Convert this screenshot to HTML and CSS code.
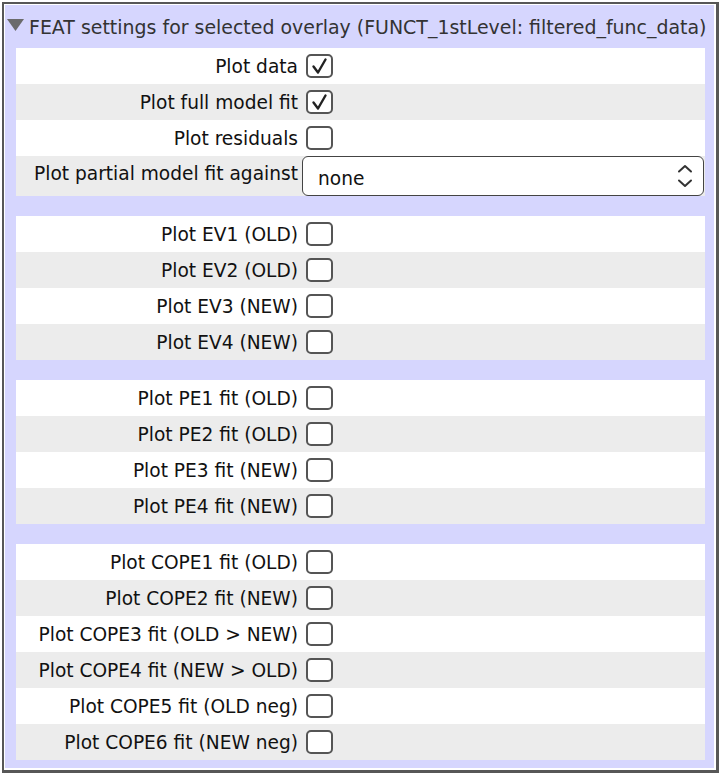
FILE: index.html
```html
<!DOCTYPE html>
<html>
<head>
<meta charset="utf-8">
<link rel="stylesheet" href="styles.css">
</head>
<body>
<div class="frame">
  <div class="inner">
    <div class="header">
      <svg class="tri" width="17" height="12" viewBox="0 0 17 12"><polygon points="0,0 17,0 8.5,12" fill="#6b6b6b"/></svg>
      <span class="title">FEAT settings for selected overlay (FUNCT_1stLevel: filtered_func_data)</span>
    </div>
    <div class="panel">
      <div class="group">
        <div class="row"><span class="label">Plot data</span><span class="cb"><svg viewBox="0 0 27 24" width="27" height="24"><polyline points="7.5,12.5 12,18.5 19.5,5.5" fill="none" stroke="#222" stroke-width="2.4" stroke-linecap="round" stroke-linejoin="round"/></svg></span></div>
        <div class="row"><span class="label">Plot full model fit</span><span class="cb"><svg viewBox="0 0 27 24" width="27" height="24"><polyline points="7.5,12.5 12,18.5 19.5,5.5" fill="none" stroke="#222" stroke-width="2.4" stroke-linecap="round" stroke-linejoin="round"/></svg></span></div>
        <div class="row"><span class="label">Plot residuals</span><span class="cb"></span></div>
        <div class="row tall"><span class="label">Plot partial model fit against</span>
          <div class="select"><span class="val">none</span>
            <svg class="chev" width="16" height="24" viewBox="0 0 16 24"><polyline points="2,7.5 8,2 14,7.5" fill="none" stroke="#333" stroke-width="2" stroke-linecap="round" stroke-linejoin="round"/><polyline points="2,16.5 8,22 14,16.5" fill="none" stroke="#333" stroke-width="2" stroke-linecap="round" stroke-linejoin="round"/></svg>
          </div>
        </div>
      </div>
      <div class="group">
        <div class="row"><span class="label">Plot EV1 (OLD)</span><span class="cb"></span></div>
        <div class="row"><span class="label">Plot EV2 (OLD)</span><span class="cb"></span></div>
        <div class="row"><span class="label">Plot EV3 (NEW)</span><span class="cb"></span></div>
        <div class="row"><span class="label">Plot EV4 (NEW)</span><span class="cb"></span></div>
      </div>
      <div class="group">
        <div class="row"><span class="label">Plot PE1 fit (OLD)</span><span class="cb"></span></div>
        <div class="row"><span class="label">Plot PE2 fit (OLD)</span><span class="cb"></span></div>
        <div class="row"><span class="label">Plot PE3 fit (NEW)</span><span class="cb"></span></div>
        <div class="row"><span class="label">Plot PE4 fit (NEW)</span><span class="cb"></span></div>
      </div>
      <div class="group">
        <div class="row"><span class="label">Plot COPE1 fit (OLD)</span><span class="cb"></span></div>
        <div class="row"><span class="label">Plot COPE2 fit (NEW)</span><span class="cb"></span></div>
        <div class="row"><span class="label">Plot COPE3 fit (OLD &gt; NEW)</span><span class="cb"></span></div>
        <div class="row"><span class="label">Plot COPE4 fit (NEW &gt; OLD)</span><span class="cb"></span></div>
        <div class="row"><span class="label">Plot COPE5 fit (OLD neg)</span><span class="cb"></span></div>
        <div class="row"><span class="label">Plot COPE6 fit (NEW neg)</span><span class="cb"></span></div>
      </div>
    </div>
  </div>
</div>
</body>
</html>
```
FILE: styles.css
```css
html, body {
  margin: 0;
  padding: 0;
  background: #fff;
}
body {
  font-family: "DejaVu Sans", sans-serif;
  color: #111;
}
.frame {
  margin: 2px 0 0 2px;
  width: 712px;
  border: 2px solid #575757;
  border-right-width: 3px;
  border-bottom-width: 3px;
}
.inner {
  border-left: 1px solid #fff;
  border-top: 1px solid #fff;
  border-right: 2px solid #fff;
  border-bottom: 2px solid #fff;
  background: #d6d6fe;
  padding: 0 9px 8px 11px;
}
.header {
  height: 43px;
  display: flex;
  align-items: center;
  margin-left: -9px;
}
.tri {
  margin: -4px 5px 0 0;
  flex: none;
}
.title {
  font-size: 18.95px;
  color: #333;
  white-space: nowrap;
}
.panel {
  display: flex;
  flex-direction: column;
  gap: 20px;
}
.group {
  display: flex;
  flex-direction: column;
}
.row {
  height: 36px;
  display: flex;
  align-items: center;
  background: #fff;
}
.row:nth-child(even) {
  background: #ececec;
}
.row.tall {
  height: 40px;
  align-items: stretch;
}
.label {
  width: 282px;
  text-align: right;
  font-size: 18.6px;
  white-space: nowrap;
  flex: none;
}
.row.tall .label {
  align-self: center;
  margin-top: -6px;
}
.cb {
  margin-left: 8px;
  width: 27px;
  height: 24px;
  box-sizing: border-box;
  border: 2px solid #555;
  border-radius: 5px;
  background: #fff;
  position: relative;
  flex: none;
}
.cb svg {
  position: absolute;
  left: -2px;
  top: -2px;
}
.select {
  margin-left: 4px;
  flex: 1;
  margin-right: 1px;
  border: 1.5px solid #444;
  border-radius: 6px;
  background: #fff;
  display: flex;
  align-items: center;
  padding: 0 10px 0 15px;
  box-sizing: border-box;
}
.val {
  flex: 1;
  font-size: 18.6px;
  margin-top: 4px;
}
.chev {
  flex: none;
}
```
